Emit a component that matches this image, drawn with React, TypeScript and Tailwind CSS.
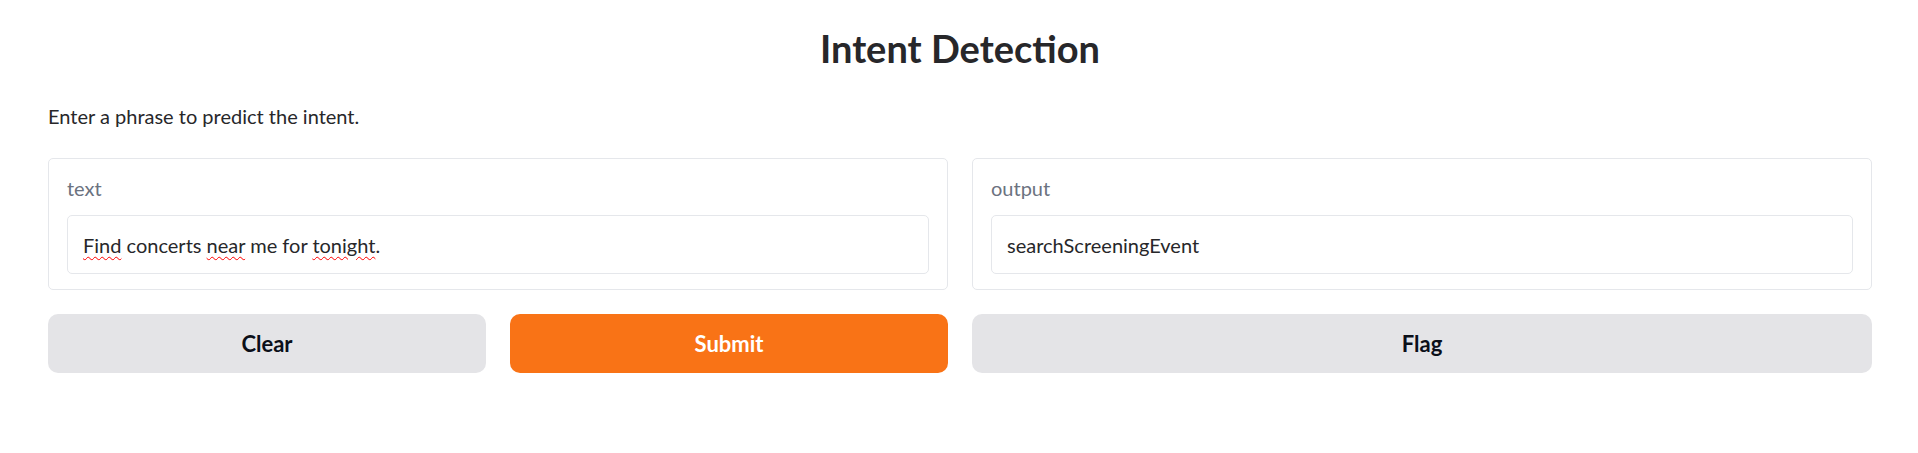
import React from "react";

function Wavy({ children }: { children: React.ReactNode }) {
  return (
    <span className="underline decoration-wavy decoration-[#ff0000] decoration-1 underline-offset-[3px]">
      {children}
    </span>
  );
}

export default function App() {
  return (
    <div className="min-h-screen bg-white pl-12 pr-[46px] text-[#27272a] font-['Lato','Noto_Sans',sans-serif]">
      <h1 className="pt-[24px] text-center text-[38px] font-bold leading-[48px] text-[#27272a]">
        Intent Detection
      </h1>
      <p className="mt-[30px] text-[20px] leading-[28px] text-[#27272a]">
        Enter a phrase to predict the intent.
      </p>
      <div className="mt-[28px] grid grid-cols-2 gap-6">
        <div className="flex flex-col gap-6">
          <div className="rounded-[5px] border border-[#e5e7eb] bg-white px-[18px] pt-[16px] pb-[15px]">
            <div className="text-[20px] leading-[26px] text-[#6b7280]">text</div>
            <div className="mt-[14px] flex h-[59px] items-center rounded-[5px] border border-[#e5e7eb] px-[15px] text-[20px] text-[#27272a]">
              <span>
                <Wavy>Find</Wavy> concerts <Wavy>near</Wavy> me for <Wavy>tonight</Wavy>.
              </span>
            </div>
          </div>
          <div className="grid grid-cols-2 gap-6">
            <button className="h-[59px] rounded-[10px] bg-[#e4e4e7] text-[22px] font-bold text-[#0b0f19]">
              Clear
            </button>
            <button className="h-[59px] rounded-[10px] bg-[#f97316] text-[22px] font-bold text-white">
              Submit
            </button>
          </div>
        </div>
        <div className="flex flex-col gap-6">
          <div className="rounded-[5px] border border-[#e5e7eb] bg-white px-[18px] pt-[16px] pb-[15px]">
            <div className="text-[20px] leading-[26px] text-[#6b7280]">output</div>
            <div className="mt-[14px] flex h-[59px] items-center rounded-[5px] border border-[#e5e7eb] px-[15px] text-[20px] text-[#27272a]">
              searchScreeningEvent
            </div>
          </div>
          <button className="h-[59px] rounded-[10px] bg-[#e4e4e7] text-[22px] font-bold text-[#0b0f19]">
            Flag
          </button>
        </div>
      </div>
    </div>
  );
}
